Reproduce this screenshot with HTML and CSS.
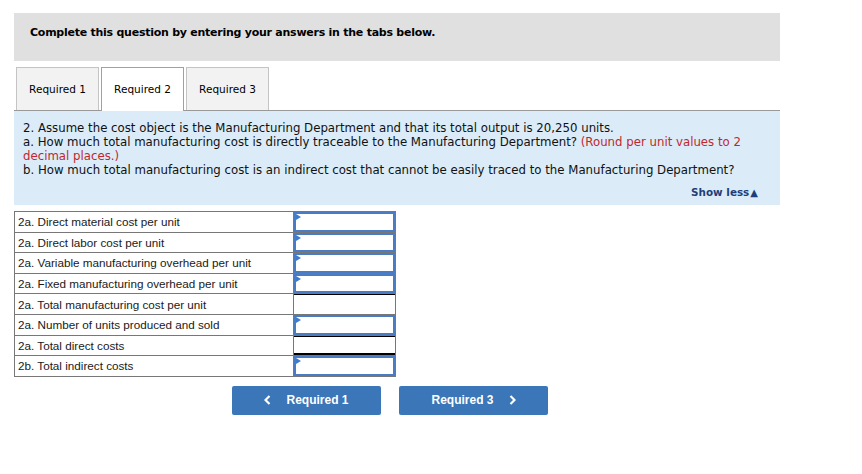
FILE: index.html
```html
<!DOCTYPE html>
<html>
<head>
<meta charset="utf-8">
<link rel="stylesheet" href="styles.css">
</head>
<body>
<div class="page">
  <div class="instructions">Complete this question by entering your answers in the tabs below.</div>
  <div class="tabs">
    <div class="tab">Required 1</div>
    <div class="tab active">Required 2</div>
    <div class="tab">Required 3</div>
  </div>
  <div class="question">
    <p>2. Assume the cost object is the Manufacturing Department and that its total output is 20,250 units.<br>
    a. How much total manufacturing cost is directly traceable to the Manufacturing Department? <span class="hint">(Round per unit values to 2 decimal places.)</span><br>
    b. How much total manufacturing cost is an indirect cost that cannot be easily traced to the Manufacturing Department?</p>
    <div class="show-less">Show less<span class="tri">&#9650;</span></div>
  </div>
  <table class="answers">
    <tr><td class="label">2a. Direct material cost per unit</td><td class="cell"><div class="input"></div></td></tr>
    <tr><td class="label">2a. Direct labor cost per unit</td><td class="cell"><div class="input"></div></td></tr>
    <tr><td class="label">2a. Variable manufacturing overhead per unit</td><td class="cell"><div class="input"></div></td></tr>
    <tr><td class="label">2a. Fixed manufacturing overhead per unit</td><td class="cell"><div class="input"></div></td></tr>
    <tr><td class="label">2a. Total manufacturing cost per unit</td><td class="cell total-a"></td></tr>
    <tr><td class="label">2a. Number of units produced and sold</td><td class="cell"><div class="input"></div></td></tr>
    <tr><td class="label">2a. Total direct costs</td><td class="cell total-b"></td></tr>
    <tr><td class="label">2b. Total indirect costs</td><td class="cell"><div class="input"></div></td></tr>
  </table>
  <div class="nav">
    <button class="btn"><svg class="chev" width="7" height="10" viewBox="0 0 7 10"><polyline points="5.5,1 1.5,5 5.5,9" fill="none" stroke="#fff" stroke-width="2.2"/></svg>Required 1</button>
    <button class="btn">Required 3<svg class="chev right" width="7" height="10" viewBox="0 0 7 10"><polyline points="1.5,1 5.5,5 1.5,9" fill="none" stroke="#fff" stroke-width="2.2"/></svg></button>
  </div>
</div>
</body>
</html>
```

FILE: styles.css
```css
html, body {
  margin: 0;
  padding: 0;
  background: #fff;
}
.page {
  padding: 13px 0 0 14px;
  width: 766px;
  font-family: "DejaVu Sans", Verdana, sans-serif;
  color: #000;
}
.instructions {
  background: #e0e0e0;
  height: 48px;
  box-sizing: border-box;
  padding: 13px 0 0 16px;
  font-size: 11px;
  letter-spacing: -0.25px;
  font-weight: bold;
  line-height: 14px;
}
.tabs {
  display: flex;
  gap: 2px;
  margin-top: 6px;
  padding-left: 2px;
  border-bottom: 1px solid #999;
  height: 43px;
}
.tab {
  width: 83px;
  height: 43px;
  box-sizing: border-box;
  border: 1px solid #c4c4c4;
  border-bottom: none;
  background: #f2f2f2;
  font-size: 10.5px;
  display: flex;
  align-items: center;
  justify-content: center;
}
.tab.active {
  background: #fff;
  border-color: #a0a0a0;
  height: 44px;
  padding-bottom: 1px;
  position: relative;
  z-index: 1;
}
.question {
  background: #dbecf8;
  padding: 10px 9px 6px 9px;
  height: 94px;
  box-sizing: border-box;
}
.question p {
  margin: 0;
  font-size: 11.75px;
  line-height: 14px;
  color: #111;
}
.hint {
  color: #c0282e;
}
.show-less {
  text-align: right;
  font-size: 10.4px;
  font-weight: bold;
  color: #1f3f7a;
  margin-top: 8px;
  padding-right: 13px;
  line-height: 14px;
}
.tri {
  font-size: 10px;
  margin-left: 1px;
}
.answers {
  margin-top: 6px;
  border-collapse: collapse;
  font-family: "Liberation Sans", Arial, sans-serif;
  font-size: 11.7px;
}
.answers td {
  border: 1px solid #777;
  height: 19.6px;
  padding: 0;
}
.answers td.label {
  width: 275px;
  padding-left: 3px;
  color: #1a1a1a;
}
.answers td.cell {
  width: 101px;
  position: relative;
}
.answers td.total-a {
  box-shadow: inset 0 1px 0 #000;
}
.answers td.total-b {
  box-shadow: inset 0 1px 0 #000, inset 0 -2px 0 #000;
}
.input {
  position: absolute;
  inset: 0;
  border: 2px solid #4a7cc4;
}
.input::before {
  content: "";
  position: absolute;
  left: 0;
  top: 0;
  border-left: 5px solid #3d7ad0;
  border-top: 3px solid transparent;
  border-bottom: 3px solid transparent;
}
.nav {
  display: flex;
  gap: 18px;
  margin: 9px 0 0 218px;
}
.btn {
  width: 149px;
  height: 29px;
  background: #3a76b8;
  color: #fff;
  border: none;
  border-radius: 2px;
  font-family: "Liberation Sans", Arial, sans-serif;
  font-weight: bold;
  font-size: 12px;
  display: flex;
  align-items: center;
  justify-content: center;
  padding: 0;
}
.chev {
  margin-right: 15px;
}
.chev.right {
  margin: 0 0 0 15px;
}
```
